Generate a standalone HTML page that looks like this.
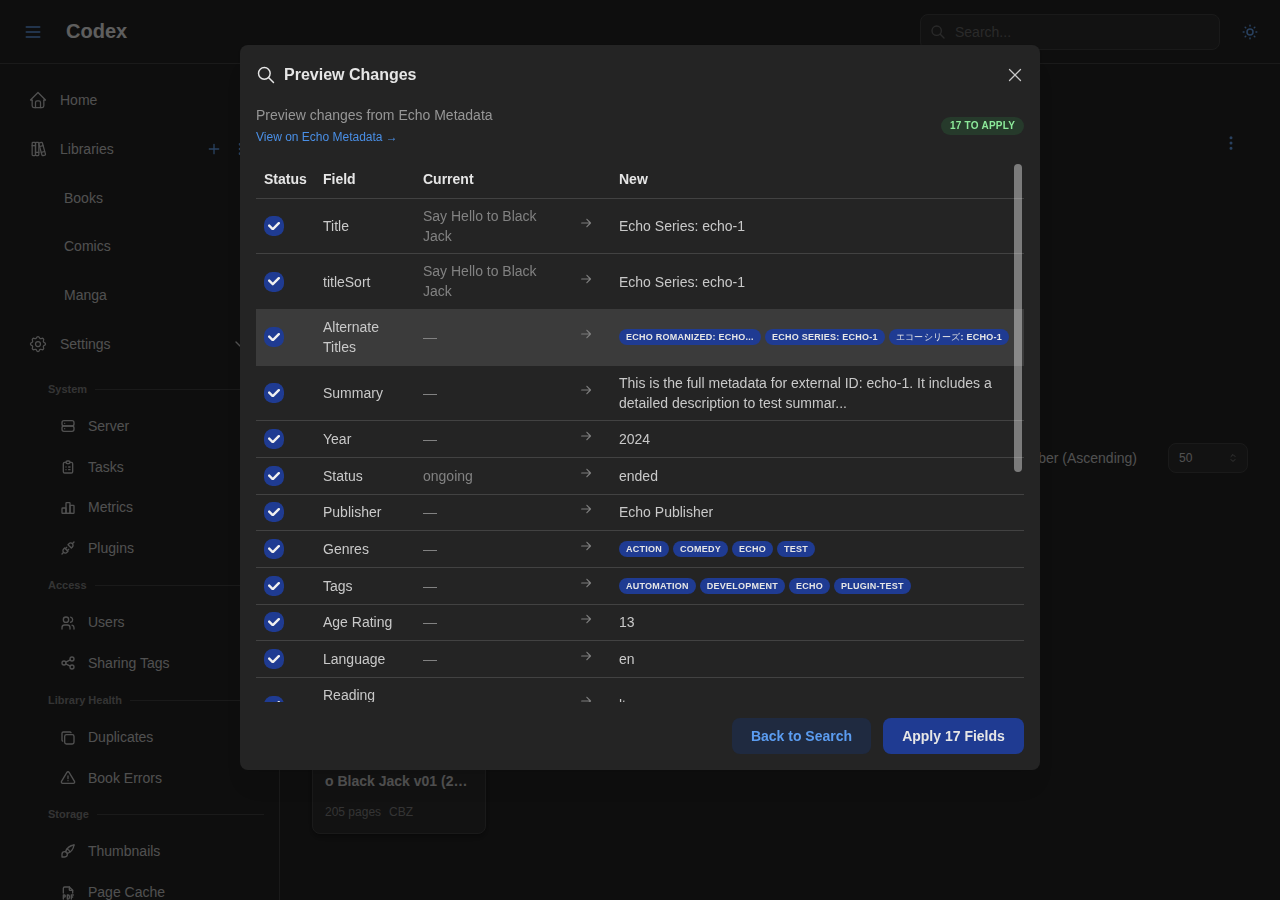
<!DOCTYPE html>
<html><head><meta charset="utf-8">
<style>
*{box-sizing:border-box;margin:0;padding:0}
html,body{width:1280px;height:900px;overflow:hidden;background:#242424;font-family:"Liberation Sans",sans-serif;color:#c9c9c9;font-size:14px}
.abs{position:absolute}
svg{display:block}
.ic{fill:none;stroke:currentColor;stroke-linecap:round;stroke-linejoin:round}
/* header */
#hdr{position:absolute;left:0;top:0;width:1280px;height:64px;border-bottom:1px solid #424242;background:#242424}
/* sidebar */
#side{position:absolute;left:0;top:64px;width:280px;height:836px;border-right:1px solid #424242;background:#242424}
.nav{position:absolute;left:0;height:20px;line-height:20px;font-size:14px;color:#c9c9c9;white-space:nowrap}
.sec{position:absolute;left:48px;height:14px;line-height:14px;font-size:11px;font-weight:700;color:#828282;white-space:nowrap}
.sec{display:flex;align-items:center;width:216px}.sec i{flex:1;height:1px;background:#424242;margin-left:8px}
/* overlay */
#ovl{position:absolute;left:0;top:0;width:1280px;height:900px;background:rgba(0,0,0,0.6)}
/* modal */
#modal{will-change:transform;position:absolute;left:240px;top:45px;width:800px;height:725px;background:#242424;border-radius:8px;box-shadow:0 1px 3px rgba(0,0,0,.05),0 20px 25px -5px rgba(0,0,0,.05),0 10px 10px -5px rgba(0,0,0,.04)}
.row{position:absolute;left:16px;width:768px;border-bottom:1px solid #424242}
.cell{position:absolute;white-space:nowrap;font-size:14px;line-height:20px;color:#c9c9c9}
.cur{color:#828282}
.chk{position:absolute;left:8px;width:20px;height:20px;border-radius:8.5px;background:#1f3b92}
.arr{color:#7d7d7d}
.bdg{display:inline-block;height:16px;line-height:14px;padding:0 6px;border:1px solid transparent;border-radius:8px;background:#1f3b92;color:#e6e6e6;font-size:9px;font-weight:700;letter-spacing:0.25px;text-transform:uppercase;margin-right:4px;vertical-align:top;white-space:nowrap;overflow:hidden}
.hl{position:absolute;left:0;width:768px;height:1px;background:#424242}
.btn{position:absolute;height:36px;border-radius:8px;font-size:14px;font-weight:700;line-height:36px;text-align:center;white-space:nowrap}
.hd{font-weight:700;color:#e6e6e6}
</style></head>
<body>
<!-- HEADER -->
<div id="hdr">
  <svg class="abs ic" style="left:23px;top:22px;color:#66a3ef" width="20" height="20" viewBox="0 0 24 24" stroke-width="2"><path d="M4 6l16 0M4 12l16 0M4 18l16 0"/></svg>
  <div class="abs" style="left:66px;top:19px;font-size:20px;font-weight:700;line-height:24px;color:#ececec">Codex</div>
  <div class="abs" style="left:920px;top:14px;width:300px;height:36px;border:1px solid #424242;border-radius:8px;background:#2e2e2e"></div>
  <svg class="abs ic" style="left:930px;top:24px;color:#696969" width="16" height="16" viewBox="0 0 24 24" stroke-width="2"><path d="M10 10m-7 0a7 7 0 1 0 14 0a7 7 0 1 0 -14 0M21 21l-6 -6"/></svg>
  <div class="abs" style="left:955px;top:22px;line-height:20px;font-size:14px;color:#696969">Search...</div>
  <svg class="abs ic" style="left:1241px;top:23px;color:#66a3ef" width="18" height="18" viewBox="0 0 24 24" stroke-width="2"><path d="M12 12m-4 0a4 4 0 1 0 8 0a4 4 0 1 0 -8 0M3 12h1m8 -9v1m8 8h1m-9 8v1m-6.4 -15.4l.7 .7m12.1 -.7l-.7 .7m0 11.4l.7 .7m-12.1 -.7l-.7 .7"/></svg>
</div>

<!-- SIDEBAR -->
<div id="side">
<svg class="abs ic" style="left:28px;top:26px" width="20" height="20" viewBox="0 0 24 24" stroke-width="1.5"><path d="M5 12l-2 0l9 -9l9 9l-2 0"/><path d="M5 12v7a2 2 0 0 0 2 2h10a2 2 0 0 0 2 -2v-7"/><path d="M9 21v-6a2 2 0 0 1 2 -2h2a2 2 0 0 1 2 2v6"/></svg>
<div class="nav" style="left:60px;top:26px">Home</div>
<svg class="abs ic" style="left:28px;top:75px" width="20" height="20" viewBox="0 0 24 24" stroke-width="1.5"><path d="M5 4m0 1a1 1 0 0 1 1 -1h2a1 1 0 0 1 1 1v14a1 1 0 0 1 -1 1h-2a1 1 0 0 1 -1 -1z"/><path d="M9 4m0 1a1 1 0 0 1 1 -1h2a1 1 0 0 1 1 1v14a1 1 0 0 1 -1 1h-2a1 1 0 0 1 -1 -1z"/><path d="M5 8h4"/><path d="M9 16h4"/><path d="M13.803 4.56l2.184 -.53c.562 -.135 1.133 .19 1.282 .732l3.695 13.418a1.02 1.02 0 0 1 -.634 1.219l-.133 .041l-2.184 .53c-.562 .135 -1.133 -.19 -1.282 -.732l-3.695 -13.418a1.02 1.02 0 0 1 .634 -1.219l.133 -.041z"/><path d="M14 9l4 -1"/><path d="M16 16l3.923 -.98"/></svg>
<div class="nav" style="left:60px;top:75px">Libraries</div>
<div class="nav" style="left:64px;top:124px">Books</div>
<div class="nav" style="left:64px;top:172px">Comics</div>
<div class="nav" style="left:64px;top:221px">Manga</div>
<svg class="abs ic" style="left:28px;top:270px" width="20" height="20" viewBox="0 0 24 24" stroke-width="1.5"><path d="M10.325 4.317c.426 -1.756 2.924 -1.756 3.35 0a1.724 1.724 0 0 0 2.573 1.066c1.543 -.94 3.31 .826 2.37 2.37a1.724 1.724 0 0 0 1.065 2.572c1.756 .426 1.756 2.924 0 3.35a1.724 1.724 0 0 0 -1.066 2.573c.94 1.543 -.826 3.31 -2.37 2.37a1.724 1.724 0 0 0 -2.572 1.065c-.426 1.756 -2.924 1.756 -3.35 0a1.724 1.724 0 0 0 -2.573 -1.066c-1.543 .94 -3.31 -.826 -2.37 -2.37a1.724 1.724 0 0 0 -1.065 -2.572c-1.756 -.426 -1.756 -2.924 0 -3.35a1.724 1.724 0 0 0 1.066 -2.573c-.94 -1.543 .826 -3.31 2.37 -2.37c1 .608 2.296 .07 2.572 -1.065z"/><path d="M9 12a3 3 0 1 0 6 0a3 3 0 0 0 -6 0"/></svg>
<div class="nav" style="left:60px;top:270px">Settings</div>
<div class="sec" style="top:318px"><span>System</span><i></i></div>
<div class="sec" style="top:514px"><span>Access</span><i></i></div>
<div class="sec" style="top:629px"><span>Library Health</span><i></i></div>
<div class="sec" style="top:743px"><span>Storage</span><i></i></div>
<svg class="abs ic" style="left:60px;top:354px" width="16" height="16" viewBox="0 0 24 24" stroke-width="2"><path d="M3 4m0 3a3 3 0 0 1 3 -3h12a3 3 0 0 1 3 3v2a3 3 0 0 1 -3 3h-12a3 3 0 0 1 -3 -3z"/><path d="M3 12m0 3a3 3 0 0 1 3 -3h12a3 3 0 0 1 3 3v2a3 3 0 0 1 -3 3h-12a3 3 0 0 1 -3 -3z"/><path d="M7 8l0 .01"/><path d="M7 16l0 .01"/></svg>
<div class="nav" style="left:88px;top:352px">Server</div>
<svg class="abs ic" style="left:60px;top:395px" width="16" height="16" viewBox="0 0 24 24" stroke-width="2"><path d="M9 5h-2a2 2 0 0 0 -2 2v12a2 2 0 0 0 2 2h10a2 2 0 0 0 2 -2v-12a2 2 0 0 0 -2 -2h-2"/><path d="M9 3m0 2a2 2 0 0 1 2 -2h2a2 2 0 0 1 2 2v0a2 2 0 0 1 -2 2h-2a2 2 0 0 1 -2 -2z"/><path d="M9 12l.01 0"/><path d="M13 12l2 0"/><path d="M9 16l.01 0"/><path d="M13 16l2 0"/></svg>
<div class="nav" style="left:88px;top:393px">Tasks</div>
<svg class="abs ic" style="left:60px;top:436px" width="16" height="16" viewBox="0 0 24 24" stroke-width="2"><path d="M3 13a1 1 0 0 1 1 -1h4a1 1 0 0 1 1 1v6a1 1 0 0 1 -1 1h-4a1 1 0 0 1 -1 -1z"/><path d="M15 9a1 1 0 0 1 1 -1h4a1 1 0 0 1 1 1v10a1 1 0 0 1 -1 1h-4a1 1 0 0 1 -1 -1z"/><path d="M9 5a1 1 0 0 1 1 -1h4a1 1 0 0 1 1 1v14a1 1 0 0 1 -1 1h-4a1 1 0 0 1 -1 -1z"/><path d="M4 20h14"/></svg>
<div class="nav" style="left:88px;top:433px">Metrics</div>
<svg class="abs ic" style="left:60px;top:476px" width="16" height="16" viewBox="0 0 24 24" stroke-width="2"><path d="M7 12l5 5l-1.5 1.5a3.536 3.536 0 1 1 -5 -5l1.5 -1.5z"/><path d="M17 12l-5 -5l1.5 -1.5a3.536 3.536 0 1 1 5 5l-1.5 1.5z"/><path d="M3 21l2.5 -2.5"/><path d="M18.5 5.5l2.5 -2.5"/><path d="M10 11l-2 2"/><path d="M13 14l-2 2"/></svg>
<div class="nav" style="left:88px;top:474px">Plugins</div>
<svg class="abs ic" style="left:60px;top:551px" width="16" height="16" viewBox="0 0 24 24" stroke-width="2"><path d="M9 7m-4 0a4 4 0 1 0 8 0a4 4 0 1 0 -8 0"/><path d="M3 21v-2a4 4 0 0 1 4 -4h4a4 4 0 0 1 4 4v2"/><path d="M16 3.13a4 4 0 0 1 0 7.75"/><path d="M21 21v-2a4 4 0 0 0 -3 -3.85"/></svg>
<div class="nav" style="left:88px;top:548px">Users</div>
<svg class="abs ic" style="left:60px;top:591px" width="16" height="16" viewBox="0 0 24 24" stroke-width="2"><path d="M6 12m-3 0a3 3 0 1 0 6 0a3 3 0 1 0 -6 0"/><path d="M18 6m-3 0a3 3 0 1 0 6 0a3 3 0 1 0 -6 0"/><path d="M18 18m-3 0a3 3 0 1 0 6 0a3 3 0 1 0 -6 0"/><path d="M8.7 10.7l6.6 -3.4"/><path d="M8.7 13.3l6.6 3.4"/></svg>
<div class="nav" style="left:88px;top:589px">Sharing Tags</div>
<svg class="abs ic" style="left:60px;top:666px" width="16" height="16" viewBox="0 0 24 24" stroke-width="2"><path d="M7 7m0 2.667a2.667 2.667 0 0 1 2.667 -2.667h8.666a2.667 2.667 0 0 1 2.667 2.667v8.666a2.667 2.667 0 0 1 -2.667 2.667h-8.666a2.667 2.667 0 0 1 -2.667 -2.667z"/><path d="M4.012 16.737a2.005 2.005 0 0 1 -1.012 -1.737v-10c0 -1.1 .9 -2 2 -2h10c.75 0 1.158 .385 1.5 1"/></svg>
<div class="nav" style="left:88px;top:663px">Duplicates</div>
<svg class="abs ic" style="left:60px;top:706px" width="16" height="16" viewBox="0 0 24 24" stroke-width="2"><path d="M12 9v4"/><path d="M10.363 3.591l-8.106 13.534a1.914 1.914 0 0 0 1.636 2.871h16.214a1.914 1.914 0 0 0 1.636 -2.87l-8.106 -13.536a1.914 1.914 0 0 0 -3.274 0z"/><path d="M12 16h.01"/></svg>
<div class="nav" style="left:88px;top:704px">Book Errors</div>
<svg class="abs ic" style="left:60px;top:779px" width="16" height="16" viewBox="0 0 24 24" stroke-width="2"><path d="M3 21v-4a4 4 0 1 1 4 4h-4"/><path d="M21 3a16 16 0 0 0 -12.8 10.2"/><path d="M21 3a16 16 0 0 1 -10.2 12.8"/><path d="M10.6 9a9 9 0 0 1 4.4 4.4"/></svg>
<div class="nav" style="left:88px;top:777px">Thumbnails</div>
<svg class="abs ic" style="left:60px;top:821px" width="16" height="16" viewBox="0 0 24 24" stroke-width="2"><path d="M14 3v4a1 1 0 0 0 1 1h4"/><path d="M5 12v-7a2 2 0 0 1 2 -2h7l5 5v4"/><path d="M5 18h1.5a1.5 1.5 0 0 0 0 -3h-1.5v6"/><path d="M17 18h2"/><path d="M20 15h-3v6"/><path d="M11 15v6h1a2 2 0 0 0 2 -2v-2a2 2 0 0 0 -2 -2h-1z"/></svg>
<div class="nav" style="left:88px;top:818px">Page Cache</div>
<svg class="abs ic" style="left:206px;top:77px;color:#66a3ef" width="16" height="16" viewBox="0 0 24 24" stroke-width="2"><path d="M12 5l0 14M5 12l14 0"/></svg>
<svg class="abs ic" style="left:232px;top:77px;color:#66a3ef" width="16" height="16" viewBox="0 0 24 24" stroke-width="2"><path d="M12 12m-1 0a1 1 0 1 0 2 0a1 1 0 1 0 -2 0M12 19m-1 0a1 1 0 1 0 2 0a1 1 0 1 0 -2 0M12 5m-1 0a1 1 0 1 0 2 0a1 1 0 1 0 -2 0"/></svg>
<svg class="abs ic" style="left:232px;top:272px;color:#c9c9c9" width="16" height="16" viewBox="0 0 24 24" stroke-width="2"><path d="M6 9l6 6l6 -6"/></svg>
</div>

<!-- MAIN BG CONTENT -->
<div id="main">
  <svg class="abs ic" style="left:1222px;top:134px;color:#66a3ef" width="18" height="18" viewBox="0 0 24 24" stroke-width="2"><path d="M12 12m-1 0a1 1 0 1 0 2 0a1 1 0 1 0 -2 0M12 19m-1 0a1 1 0 1 0 2 0a1 1 0 1 0 -2 0M12 5m-1 0a1 1 0 1 0 2 0a1 1 0 1 0 -2 0"/></svg>
  <div class="abs" style="left:937px;top:448px;width:200px;text-align:right;font-size:14px;line-height:20px;color:#c9c9c9;white-space:nowrap">Issue Number (Ascending)</div>
  <div class="abs" style="left:1168px;top:443px;width:80px;height:30px;border:1px solid #424242;border-radius:8px;background:#2e2e2e"></div>
  <div class="abs" style="left:1179px;top:450px;font-size:12px;line-height:16px;color:#c9c9c9">50</div>
  <svg class="abs ic" style="left:1227px;top:452px;color:#828282" width="12" height="12" viewBox="0 0 24 24" stroke-width="2"><path d="M8 9l4 -4l4 4"/><path d="M16 15l-4 4l-4 -4"/></svg>
  <div class="abs" style="left:312px;top:560px;width:174px;height:274px;border:1px solid #424242;border-radius:8px;background:#2e2e2e;box-shadow:0 1px 3px rgba(0,0,0,.25),0 4px 8px rgba(0,0,0,.15)"></div>
  <div class="abs" style="left:325px;top:771.4px;font-size:14px;font-weight:700;line-height:20px;color:#c9c9c9;white-space:nowrap">o Black Jack v01 (2…</div>
  <div class="abs" style="left:325px;top:804px;font-size:12px;line-height:16px;color:#828282;white-space:nowrap">205 pages<span style="margin-left:8px">CBZ</span></div>
</div>

<div id="ovl"></div>

<!-- MODAL -->
<div id="modal">
<svg class="abs ic" style="left:16px;top:20px;color:#e6e6e6" width="20" height="20" viewBox="0 0 24 24" stroke-width="1.75"><path d="M10 10m-7 0a7 7 0 1 0 14 0a7 7 0 1 0 -14 0"/><path d="M21 21l-6 -6"/></svg>
<div class="abs" style="left:44px;top:19.6px;font-size:16px;font-weight:700;line-height:20px;color:#e6e6e6;white-space:nowrap">Preview Changes</div>
<svg class="abs ic" style="left:764px;top:19px;color:#c9c9c9" width="22" height="22" viewBox="0 0 24 24" stroke-width="1.4"><path d="M18 6l-12 12"/><path d="M6 6l12 12"/></svg>
<div class="abs" style="left:16px;top:60px;font-size:14px;line-height:20px;color:#969696;white-space:nowrap">Preview changes from Echo Metadata</div>
<div class="abs" style="left:16px;top:83.6px;font-size:12px;line-height:16px;color:#4a8fe6;white-space:nowrap">View on Echo Metadata →</div>
<div class="abs" style="left:701px;top:72px;width:83px;height:18px;border-radius:9px;background:#263a2b;color:#8ce99a;font-size:10px;font-weight:700;letter-spacing:0.25px;line-height:18px;text-align:center;white-space:nowrap">17 TO APPLY</div>
<div id="tbl" class="abs" style="left:16px;top:119px;width:768px;height:538px;overflow:hidden">
<div class="cell hd" style="left:8px;top:5px">Status</div>
<div class="cell hd" style="left:67px;top:5px">Field</div>
<div class="cell hd" style="left:167px;top:5px">Current</div>
<div class="cell hd" style="left:363px;top:5px">New</div>
<div class="hl" style="top:34px"></div>
<div class="hl" style="top:89px"></div>
<div class="chk" style="top:52px"><svg class="abs" style="left:4px;top:5.8px" width="12" height="8.4" viewBox="0 0 10 7"><path fill="#f0f0f0" d="M4 4.586L1.707 2.293A1 1 0 1 0 .293 3.707l3 3a.997.997 0 0 0 1.414 0l5-5A1 1 0 1 0 8.293.293L4 4.586z"/></svg></div>
<div class="cell " style="left:67px;top:52.0px">Title</div>
<div class="cell cur" style="left:167px;top:42.0px">Say Hello to Black<br>Jack</div>
<svg class="abs ic arr" style="left:322px;top:51px" width="16" height="16" viewBox="0 0 16 16" stroke-width="1.2"><path d="M3.7 8H12.5M8.9 4.3L12.5 8L8.9 11.7"/></svg>
<div class="cell " style="left:363px;top:52.0px">Echo Series: echo-1</div>
<div class="hl" style="top:145px"></div>
<div class="chk" style="top:107.5px"><svg class="abs" style="left:4px;top:5.8px" width="12" height="8.4" viewBox="0 0 10 7"><path fill="#f0f0f0" d="M4 4.586L1.707 2.293A1 1 0 1 0 .293 3.707l3 3a.997.997 0 0 0 1.414 0l5-5A1 1 0 1 0 8.293.293L4 4.586z"/></svg></div>
<div class="cell " style="left:67px;top:107.5px">titleSort</div>
<div class="cell cur" style="left:167px;top:97.0px">Say Hello to Black<br>Jack</div>
<svg class="abs ic arr" style="left:322px;top:106.5px" width="16" height="16" viewBox="0 0 16 16" stroke-width="1.2"><path d="M3.7 8H12.5M8.9 4.3L12.5 8L8.9 11.7"/></svg>
<div class="cell " style="left:363px;top:107.5px">Echo Series: echo-1</div>
<div class="abs" style="left:0;top:145px;width:768px;height:57px;background:#3b3b3b"></div>
<div class="chk" style="top:163px"><svg class="abs" style="left:4px;top:5.8px" width="12" height="8.4" viewBox="0 0 10 7"><path fill="#f0f0f0" d="M4 4.586L1.707 2.293A1 1 0 1 0 .293 3.707l3 3a.997.997 0 0 0 1.414 0l5-5A1 1 0 1 0 8.293.293L4 4.586z"/></svg></div>
<div class="cell " style="left:67px;top:153.0px">Alternate<br>Titles</div>
<div class="cell cur" style="left:167px;top:163.0px">—</div>
<svg class="abs ic arr" style="left:322px;top:162px" width="16" height="16" viewBox="0 0 16 16" stroke-width="1.2"><path d="M3.7 8H12.5M8.9 4.3L12.5 8L8.9 11.7"/></svg>
<div class="abs" style="left:363px;top:165px;white-space:nowrap;height:16px"><span class="bdg" style="width:142px;text-overflow:ellipsis">ECHO ROMANIZED: ECHO...</span><span class="bdg">ECHO SERIES: ECHO-1</span><span class="bdg"><span style="font-weight:400">エコーシリーズ</span>: ECHO-1</span></div>
<div class="hl" style="top:256px"></div>
<div class="chk" style="top:219px"><svg class="abs" style="left:4px;top:5.8px" width="12" height="8.4" viewBox="0 0 10 7"><path fill="#f0f0f0" d="M4 4.586L1.707 2.293A1 1 0 1 0 .293 3.707l3 3a.997.997 0 0 0 1.414 0l5-5A1 1 0 1 0 8.293.293L4 4.586z"/></svg></div>
<div class="cell " style="left:67px;top:219.0px">Summary</div>
<div class="cell cur" style="left:167px;top:219.0px">—</div>
<svg class="abs ic arr" style="left:322px;top:218px" width="16" height="16" viewBox="0 0 16 16" stroke-width="1.2"><path d="M3.7 8H12.5M8.9 4.3L12.5 8L8.9 11.7"/></svg>
<div class="cell " style="left:363px;top:209.0px">This is the full metadata for external ID: echo-1. It includes a<br>detailed description to test summar...</div>
<div class="hl" style="top:293px"></div>
<div class="chk" style="top:265px"><svg class="abs" style="left:4px;top:5.8px" width="12" height="8.4" viewBox="0 0 10 7"><path fill="#f0f0f0" d="M4 4.586L1.707 2.293A1 1 0 1 0 .293 3.707l3 3a.997.997 0 0 0 1.414 0l5-5A1 1 0 1 0 8.293.293L4 4.586z"/></svg></div>
<div class="cell " style="left:67px;top:265.0px">Year</div>
<div class="cell cur" style="left:167px;top:265.0px">—</div>
<svg class="abs ic arr" style="left:322px;top:264px" width="16" height="16" viewBox="0 0 16 16" stroke-width="1.2"><path d="M3.7 8H12.5M8.9 4.3L12.5 8L8.9 11.7"/></svg>
<div class="cell " style="left:363px;top:265.0px">2024</div>
<div class="hl" style="top:330px"></div>
<div class="chk" style="top:302px"><svg class="abs" style="left:4px;top:5.8px" width="12" height="8.4" viewBox="0 0 10 7"><path fill="#f0f0f0" d="M4 4.586L1.707 2.293A1 1 0 1 0 .293 3.707l3 3a.997.997 0 0 0 1.414 0l5-5A1 1 0 1 0 8.293.293L4 4.586z"/></svg></div>
<div class="cell " style="left:67px;top:302.0px">Status</div>
<div class="cell cur" style="left:167px;top:302.0px">ongoing</div>
<svg class="abs ic arr" style="left:322px;top:301px" width="16" height="16" viewBox="0 0 16 16" stroke-width="1.2"><path d="M3.7 8H12.5M8.9 4.3L12.5 8L8.9 11.7"/></svg>
<div class="cell " style="left:363px;top:302.0px">ended</div>
<div class="hl" style="top:366px"></div>
<div class="chk" style="top:338px"><svg class="abs" style="left:4px;top:5.8px" width="12" height="8.4" viewBox="0 0 10 7"><path fill="#f0f0f0" d="M4 4.586L1.707 2.293A1 1 0 1 0 .293 3.707l3 3a.997.997 0 0 0 1.414 0l5-5A1 1 0 1 0 8.293.293L4 4.586z"/></svg></div>
<div class="cell " style="left:67px;top:338.0px">Publisher</div>
<div class="cell cur" style="left:167px;top:338.0px">—</div>
<svg class="abs ic arr" style="left:322px;top:337px" width="16" height="16" viewBox="0 0 16 16" stroke-width="1.2"><path d="M3.7 8H12.5M8.9 4.3L12.5 8L8.9 11.7"/></svg>
<div class="cell " style="left:363px;top:338.0px">Echo Publisher</div>
<div class="hl" style="top:403px"></div>
<div class="chk" style="top:375px"><svg class="abs" style="left:4px;top:5.8px" width="12" height="8.4" viewBox="0 0 10 7"><path fill="#f0f0f0" d="M4 4.586L1.707 2.293A1 1 0 1 0 .293 3.707l3 3a.997.997 0 0 0 1.414 0l5-5A1 1 0 1 0 8.293.293L4 4.586z"/></svg></div>
<div class="cell " style="left:67px;top:375.0px">Genres</div>
<div class="cell cur" style="left:167px;top:375.0px">—</div>
<svg class="abs ic arr" style="left:322px;top:374px" width="16" height="16" viewBox="0 0 16 16" stroke-width="1.2"><path d="M3.7 8H12.5M8.9 4.3L12.5 8L8.9 11.7"/></svg>
<div class="abs" style="left:363px;top:377px;white-space:nowrap;height:16px"><span class="bdg">ACTION</span><span class="bdg">COMEDY</span><span class="bdg">ECHO</span><span class="bdg">TEST</span></div>
<div class="hl" style="top:440px"></div>
<div class="chk" style="top:412px"><svg class="abs" style="left:4px;top:5.8px" width="12" height="8.4" viewBox="0 0 10 7"><path fill="#f0f0f0" d="M4 4.586L1.707 2.293A1 1 0 1 0 .293 3.707l3 3a.997.997 0 0 0 1.414 0l5-5A1 1 0 1 0 8.293.293L4 4.586z"/></svg></div>
<div class="cell " style="left:67px;top:412.0px">Tags</div>
<div class="cell cur" style="left:167px;top:412.0px">—</div>
<svg class="abs ic arr" style="left:322px;top:411px" width="16" height="16" viewBox="0 0 16 16" stroke-width="1.2"><path d="M3.7 8H12.5M8.9 4.3L12.5 8L8.9 11.7"/></svg>
<div class="abs" style="left:363px;top:414px;white-space:nowrap;height:16px"><span class="bdg">AUTOMATION</span><span class="bdg">DEVELOPMENT</span><span class="bdg">ECHO</span><span class="bdg">PLUGIN-TEST</span></div>
<div class="hl" style="top:476px"></div>
<div class="chk" style="top:448px"><svg class="abs" style="left:4px;top:5.8px" width="12" height="8.4" viewBox="0 0 10 7"><path fill="#f0f0f0" d="M4 4.586L1.707 2.293A1 1 0 1 0 .293 3.707l3 3a.997.997 0 0 0 1.414 0l5-5A1 1 0 1 0 8.293.293L4 4.586z"/></svg></div>
<div class="cell " style="left:67px;top:448.0px">Age Rating</div>
<div class="cell cur" style="left:167px;top:448.0px">—</div>
<svg class="abs ic arr" style="left:322px;top:447px" width="16" height="16" viewBox="0 0 16 16" stroke-width="1.2"><path d="M3.7 8H12.5M8.9 4.3L12.5 8L8.9 11.7"/></svg>
<div class="cell " style="left:363px;top:448.0px">13</div>
<div class="hl" style="top:513px"></div>
<div class="chk" style="top:485px"><svg class="abs" style="left:4px;top:5.8px" width="12" height="8.4" viewBox="0 0 10 7"><path fill="#f0f0f0" d="M4 4.586L1.707 2.293A1 1 0 1 0 .293 3.707l3 3a.997.997 0 0 0 1.414 0l5-5A1 1 0 1 0 8.293.293L4 4.586z"/></svg></div>
<div class="cell " style="left:67px;top:485.0px">Language</div>
<div class="cell cur" style="left:167px;top:485.0px">—</div>
<svg class="abs ic arr" style="left:322px;top:484px" width="16" height="16" viewBox="0 0 16 16" stroke-width="1.2"><path d="M3.7 8H12.5M8.9 4.3L12.5 8L8.9 11.7"/></svg>
<div class="cell " style="left:363px;top:485.0px">en</div>
<div class="hl" style="top:570px"></div>
<div class="chk" style="top:531.5px"><svg class="abs" style="left:4px;top:5.8px" width="12" height="8.4" viewBox="0 0 10 7"><path fill="#f0f0f0" d="M4 4.586L1.707 2.293A1 1 0 1 0 .293 3.707l3 3a.997.997 0 0 0 1.414 0l5-5A1 1 0 1 0 8.293.293L4 4.586z"/></svg></div>
<div class="cell " style="left:67px;top:521.0px">Reading<br>Direction</div>
<div class="cell cur" style="left:167px;top:531.0px">—</div>
<svg class="abs ic arr" style="left:322px;top:529px" width="16" height="16" viewBox="0 0 16 16" stroke-width="1.2"><path d="M3.7 8H12.5M8.9 4.3L12.5 8L8.9 11.7"/></svg>
<div class="cell " style="left:363px;top:531.0px">ltr</div>
<div class="abs" style="left:758px;top:0px;width:8px;height:308px;border-radius:4px;background:rgba(255,255,255,0.4)"></div>
</div>
<div class="btn" style="left:492px;top:673px;width:139px;background:#1f2a40;color:#5b9cf0">Back to Search</div>
<div class="btn" style="left:643px;top:673px;width:141px;background:#1f3b92;color:#e6e6e6">Apply 17 Fields</div>
</div>
</body></html>
